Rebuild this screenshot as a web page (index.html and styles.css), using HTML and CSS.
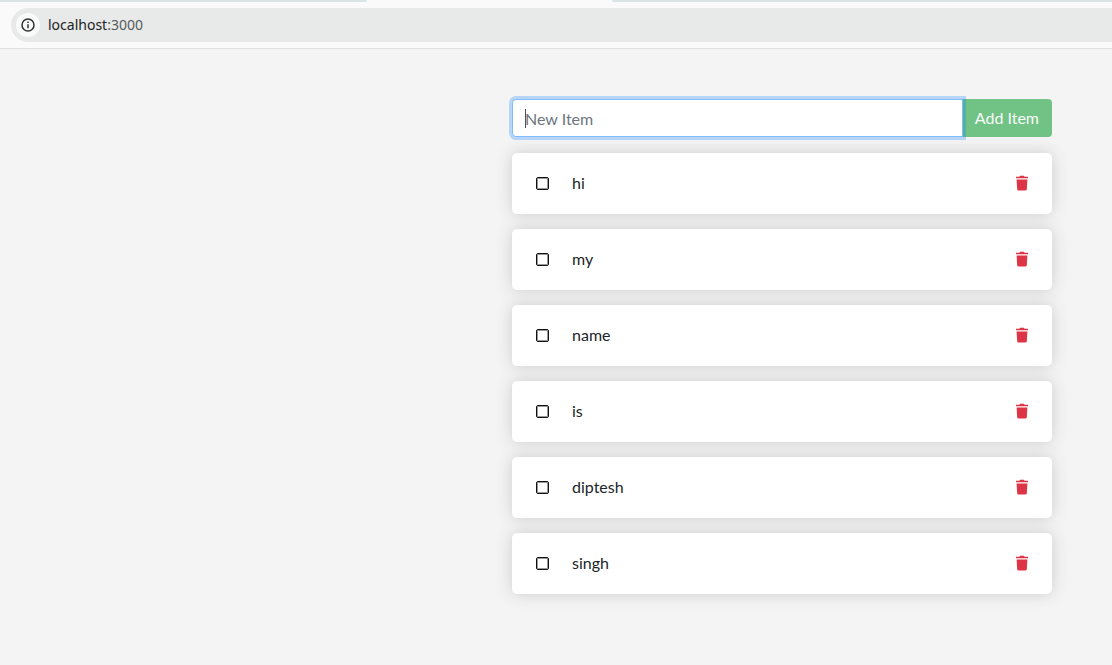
FILE: index.html
```html
<!DOCTYPE html>
<html lang="en">
<head>
  <meta charset="utf-8">
  <meta name="viewport" content="width=device-width, initial-scale=1">
  <title>Todo App</title>
  <link rel="stylesheet" href="styles.css">
</head>
<body>
  <svg class="sprite" aria-hidden="true">
    <symbol id="trash" viewBox="0 0 14 16">
      <path fill="currentColor" d="M1 1.8h3.4L5.1.7h3.8l.7 1.1H13v1.5H1zM1.6 4.6h10.8l-.6 9.7q-.1 1.3-1.4 1.3H3.6q-1.3 0-1.4-1.3z"/>
    </symbol>
  </svg>
  <header class="browser">
    <div class="tabs"><span class="tab-edge tab-edge-left"></span><span class="tab-edge tab-edge-right"></span></div>
    <div class="address">
      <button class="site-info" type="button" aria-label="Site information">
        <svg width="14" height="14" viewBox="0 0 14 14" fill="none" stroke="currentColor" stroke-width="1.5">
          <circle cx="7" cy="7" r="6"/>
          <path d="M7 6.2v4M7 3.6v1.5"/>
        </svg>
      </button>
      <span class="url">localhost<span class="port">:3000</span></span>
    </div>
  </header>
  <main class="todo">
    <form class="new-item">
      <div class="field">
        <input class="field-input" type="text" placeholder="New Item" aria-label="New item">
        <span class="caret"></span>
      </div>
      <button class="add" type="button">Add Item</button>
    </form>
    <ul class="items">
      <li class="item"><input class="check" type="checkbox" id="i1"><label class="name" for="i1">hi</label><button class="remove" type="button" aria-label="Remove hi"><svg width="14" height="16"><use href="#trash"/></svg></button></li>
      <li class="item"><input class="check" type="checkbox" id="i2"><label class="name" for="i2">my</label><button class="remove" type="button" aria-label="Remove my"><svg width="14" height="16"><use href="#trash"/></svg></button></li>
      <li class="item"><input class="check" type="checkbox" id="i3"><label class="name" for="i3">name</label><button class="remove" type="button" aria-label="Remove name"><svg width="14" height="16"><use href="#trash"/></svg></button></li>
      <li class="item"><input class="check" type="checkbox" id="i4"><label class="name" for="i4">is</label><button class="remove" type="button" aria-label="Remove is"><svg width="14" height="16"><use href="#trash"/></svg></button></li>
      <li class="item"><input class="check" type="checkbox" id="i5"><label class="name" for="i5">diptesh</label><button class="remove" type="button" aria-label="Remove diptesh"><svg width="14" height="16"><use href="#trash"/></svg></button></li>
      <li class="item"><input class="check" type="checkbox" id="i6"><label class="name" for="i6">singh</label><button class="remove" type="button" aria-label="Remove singh"><svg width="14" height="16"><use href="#trash"/></svg></button></li>
    </ul>
  </main>
</body>
</html>
```
FILE: styles.css
```css
* {
  box-sizing: border-box;
}

body {
  margin: 0;
  background: #f4f4f4;
  color: #212529;
  font: 16px/24px Lato, sans-serif;
}

button {
  border: 0;
  font: inherit;
}

.sprite {
  display: block;
  width: 0;
  height: 0;
}

.browser {
  padding-bottom: 6px;
  border-bottom: 1px solid #dfe1e1;
  background: #fafafa;
}

.tabs {
  display: grid;
  grid-template-columns: 33% 1fr 45%;
  height: 8px;
}

.tab-edge {
  height: 2px;
  background: #d9e4e4;
}

.tab-edge-left {
  border-bottom-right-radius: 3px 2px;
}

.tab-edge-right {
  grid-column: 3;
  border-bottom-left-radius: 3px 2px;
}

.address {
  display: flex;
  align-items: center;
  gap: 8px;
  height: 34px;
  margin-left: 11px;
  padding-left: 5px;
  border-radius: 17px 0 0 17px;
  background: #e8eae9;
}

.site-info {
  display: grid;
  place-items: center;
  width: 24px;
  height: 24px;
  padding: 0;
  border-radius: 50%;
  background: #fafafa;
  color: #303333;
}

.url {
  color: #202323;
  font: 14px/20px "Noto Sans", sans-serif;
}

.port {
  color: #555959;
}

.todo {
  max-width: 540px;
  margin: 50px 60px 0 auto;
  padding-bottom: 48px;
}

.new-item {
  display: flex;
  margin-bottom: 16px;
}

.field {
  position: relative;
  z-index: 1;
  flex: 1;
}

.field-input {
  display: block;
  width: 100%;
  height: 38px;
  padding: 6px 12px;
  border: 1px solid #80bdff;
  border-radius: 4px 0 0 4px;
  outline: 0;
  background: #fff;
  box-shadow: 0 0 0 3px rgba(0, 123, 255, 0.25);
  color: #495057;
  font: inherit;
}

.field-input::placeholder {
  color: #6c757d;
  opacity: 1;
}

.caret {
  position: absolute;
  top: 10px;
  left: 13px;
  width: 1px;
  height: 19px;
  background: #495057;
}

.add {
  height: 38px;
  margin-left: -1px;
  padding: 6px 13px;
  border-radius: 0 4px 4px 0;
  background: #71c285;
  color: #f9fcfa;
}

.items {
  display: grid;
  gap: 15px;
  margin: 0;
  padding: 0;
  list-style: none;
}

.item {
  display: flex;
  align-items: center;
  padding: 18px 23px;
  border-radius: 5px;
  background: #fff;
  box-shadow: 0 0 16px #ccc;
}

.check {
  appearance: none;
  width: 13px;
  height: 13px;
  margin: 0 23px 0 1px;
  border: 1px solid #111;
  border-radius: 2px;
  box-shadow: inset 0 0 0 1px rgba(0, 0, 0, 0.4);
}

.name {
  flex: 1;
  padding-bottom: 1px;
}

.remove {
  display: flex;
  padding: 0 0 1px;
  background: none;
  color: #dc3545;
}
```
